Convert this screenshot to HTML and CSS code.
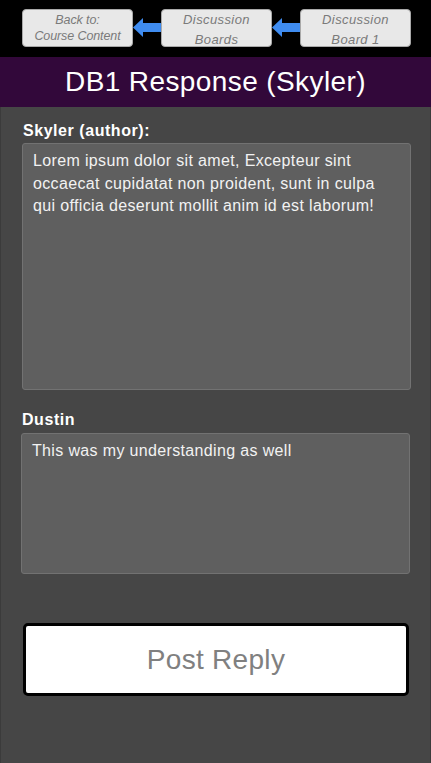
FILE: index.html
```html
<!DOCTYPE html>
<html lang="en">
<head>
<meta charset="utf-8">
<title>DB1 Response (Skyler)</title>
<link rel="stylesheet" href="styles.css">
</head>
<body>
<nav class="crumbs">
  <div class="crumb crumb-tight">Back to:<br>Course Content</div>
  <svg class="arrow" width="28" height="19" viewBox="0 0 28 19"><polygon points="0,9.5 10,0 10,5 28,5 28,14 10,14 10,19" fill="#3f8cf0"/></svg>
  <div class="crumb">Discussion<br>Boards</div>
  <svg class="arrow" width="28" height="19" viewBox="0 0 28 19"><polygon points="0,9.5 10,0 10,5 28,5 28,14 10,14 10,19" fill="#3f8cf0"/></svg>
  <div class="crumb">Discussion<br>Board 1</div>
</nav>
<header class="title">DB1 Response (Skyler)</header>
<main class="content">
  <section class="post">
    <h2 class="author">Skyler (author):</h2>
    <div class="bubble bubble-main">Lorem ipsum dolor sit amet, Excepteur sint occaecat cupidatat non proident, sunt in culpa qui officia deserunt mollit anim id est laborum!</div>
  </section>
  <section class="post reply">
    <h2 class="author">Dustin</h2>
    <div class="bubble bubble-reply">This was my understanding as well</div>
  </section>
  <button class="post-btn" type="button">Post Reply</button>
</main>
</body>
</html>
```
FILE: styles.css
```css
html, body {
  margin: 0;
  padding: 0;
}
body {
  width: 431px;
  min-height: 763px;
  background: #464646;
  font-family: "Liberation Sans", Arial, sans-serif;
  display: flex;
  flex-direction: column;
}
.crumbs {
  background: #000;
  height: 57px;
  box-sizing: border-box;
  padding: 9px 0 0 22px;
  display: flex;
  align-items: flex-start;
}
.crumb {
  width: 111px;
  height: 38px;
  box-sizing: border-box;
  padding-top: 3px;
  background: #e8e8e8;
  border: 1px solid #a9a9a9;
  border-radius: 4px;
  color: #7a7a7a;
  font-style: italic;
  font-size: 13px;
  letter-spacing: 0.4px;
  line-height: 20px;
  text-align: center;
  display: flex;
  align-items: center;
  justify-content: center;
}
.crumb-tight {
  padding-top: 0;
  font-size: 12.5px;
  letter-spacing: -0.1px;
  line-height: 16px;
}
.arrow {
  margin: 9px 0 0 0;
  flex: none;
}
.title {
  background: #32083a;
  height: 50px;
  color: #fff;
  font-size: 28px;
  letter-spacing: 0.4px;
  line-height: 50px;
  text-align: center;
}
.content {
  flex: 1;
  border-left: 1px solid #3b3b3b;
  border-right: 1px solid #3b3b3b;
  padding: 15px 19px 60px 21px;
  display: flex;
  flex-direction: column;
}
.post {
  display: flex;
  flex-direction: column;
}
.reply {
  margin-top: 21px;
}
.author {
  margin: 0 0 3px 1px;
  color: #fff;
  font-size: 16px;
  font-weight: bold;
  letter-spacing: 0.55px;
  line-height: 18px;
}
.reply .author {
  margin: 0 0 4px 0;
}
.bubble {
  width: 389px;
  box-sizing: border-box;
  background: #5f5f5f;
  border: 1px solid #727272;
  border-radius: 3px;
  padding: 6px 10px;
  color: #f2f2f2;
  font-size: 16px;
  letter-spacing: 0.35px;
  line-height: 22.5px;
}
.bubble-main {
  height: 247px;
}
.bubble-reply {
  height: 141px;
  margin-left: -1px;
}
.post-btn {
  margin: 49px 0 0 1px;
  width: 386px;
  height: 73px;
  box-sizing: border-box;
  background: #fff;
  border: 3px solid #000;
  border-radius: 5px;
  color: #808080;
  font-family: "Liberation Sans", Arial, sans-serif;
  font-size: 28px;
  letter-spacing: 0.3px;
  padding: 0;
  cursor: pointer;
}
```
